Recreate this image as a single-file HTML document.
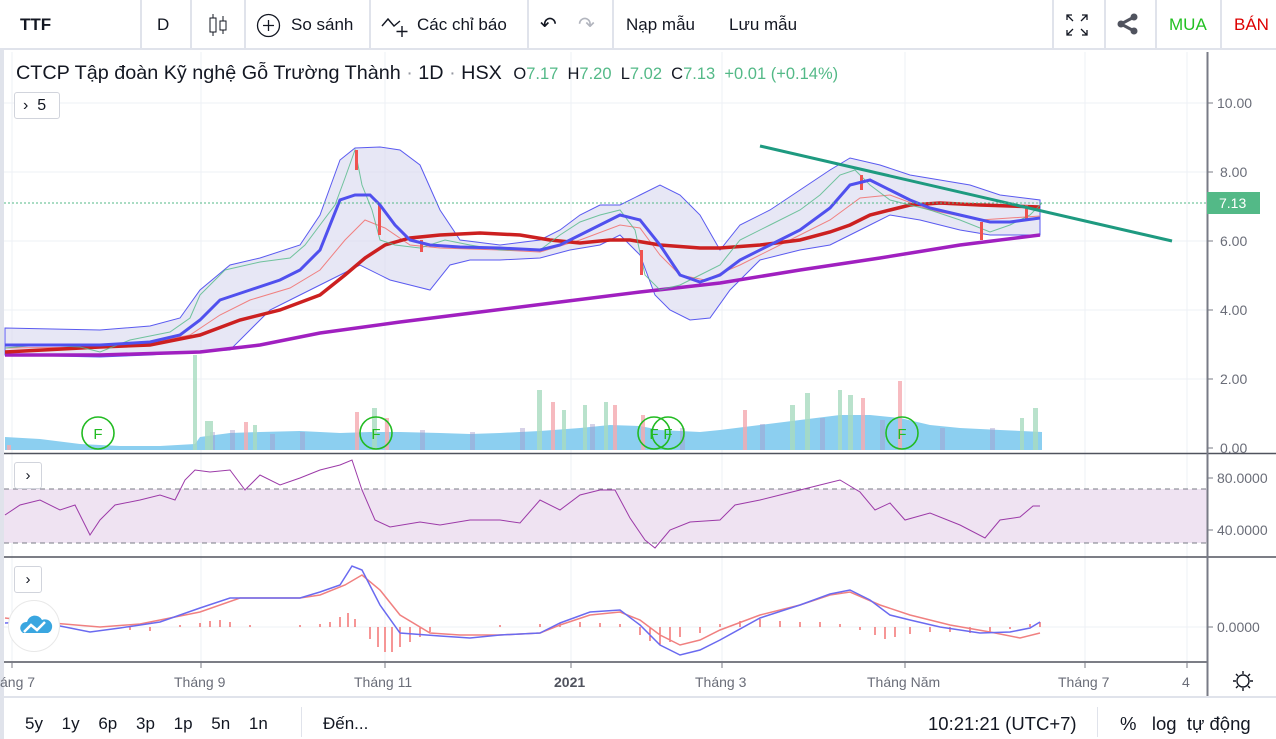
<!DOCTYPE html>
<html><head><meta charset="utf-8"><style>
*{margin:0;padding:0;box-sizing:border-box}
body{width:1276px;height:739px;overflow:hidden;background:#fff;font-family:"Liberation Sans","Noto Sans CJK SC",sans-serif;color:#131722;position:relative}
.tb{position:absolute;top:0;left:0;width:1276px;height:50px;border-bottom:2px solid #e0e3eb;background:#fff}
.tb div{position:absolute;top:0;height:50px;line-height:50px;font-size:17px}
.sep{position:absolute;top:0;width:2px;height:50px;background:#e0e3eb}
.t{position:absolute;white-space:nowrap}
.ax{font-size:14px;color:#6a6d78}
</style></head><body>
<div style="position:absolute;left:0;top:50px;width:4px;height:689px;background:#e0e3eb"></div>
<div class="tb">
<div style="left:20px;font-weight:bold">TTF</div>
<div class="sep" style="left:140px"></div>
<div style="left:157px">D</div>
<div class="sep" style="left:190px"></div>
<svg style="position:absolute;left:207px;top:13px" width="22" height="24"><line x1="6" y1="1" x2="6" y2="23" stroke="#131722"/><rect x="3" y="5" width="6" height="14" fill="#fff" stroke="#131722"/><line x1="16" y1="3" x2="16" y2="21" stroke="#131722"/><rect x="13" y="8" width="6" height="9" fill="#fff" stroke="#131722"/></svg>
<div class="sep" style="left:244px"></div>
<svg style="position:absolute;left:256px;top:13px" width="25" height="25"><circle cx="12.5" cy="12.5" r="11" fill="none" stroke="#131722" stroke-width="1.3"/><path d="M12.5 7v11M7 12.5h11" stroke="#131722" stroke-width="1.3"/></svg>
<div style="left:291px">So sánh</div>
<div class="sep" style="left:369px"></div>
<svg style="position:absolute;left:380px;top:12px" width="32" height="28"><path d="M2 14l6-7 6 7 6-5" fill="none" stroke="#131722" stroke-width="1.4"/><path d="M22 14v11M16.5 19.5h11" stroke="#131722" stroke-width="1.4"/></svg>
<div style="left:417px">Các chỉ báo</div>
<div class="sep" style="left:527px"></div>
<div style="left:540px;font-size:20px">↶</div>
<div style="left:578px;font-size:20px;color:#b2b5be">↷</div>
<div class="sep" style="left:612px"></div>
<div style="left:626px">Nạp mẫu</div>
<div style="left:729px">Lưu mẫu</div>
<div class="sep" style="left:1052px"></div>
<svg style="position:absolute;left:1065px;top:13px" width="24" height="24" fill="none" stroke="#131722" stroke-width="1.3"><path d="M2 7V2h5M2 2l6 6M17 2h5v5M22 2l-6 6M2 17v5h5M2 22l6-6M22 17v5h-5M22 22l-6-6"/></svg>
<div class="sep" style="left:1104px"></div>
<svg style="position:absolute;left:1116px;top:13px" width="24" height="22"><circle cx="18" cy="4" r="3.5" fill="#50535e"/><circle cx="5" cy="11" r="3.5" fill="#50535e"/><circle cx="18" cy="18" r="3.5" fill="#50535e"/><path d="M18 4L5 11l13 7" fill="none" stroke="#50535e" stroke-width="3"/></svg>
<div class="sep" style="left:1155px"></div>
<div style="left:1169px;color:#22c022">MUA</div>
<div class="sep" style="left:1220px"></div>
<div style="left:1234px;color:#d00">BÁN</div>
</div>

<svg style="position:absolute;left:0;top:52px" width="1276" height="687">
<g transform="translate(0,-52)">
<g stroke="#eef1f6" stroke-width="1">
<line x1="12" y1="52" x2="12" y2="662"/><line x1="201" y1="52" x2="201" y2="662"/><line x1="385" y1="52" x2="385" y2="662"/><line x1="571" y1="52" x2="571" y2="662"/><line x1="722" y1="52" x2="722" y2="662"/><line x1="905" y1="52" x2="905" y2="662"/><line x1="1085" y1="52" x2="1085" y2="662"/><line x1="1187" y1="52" x2="1187" y2="662"/>
<line x1="4" y1="103" x2="1207" y2="103"/><line x1="4" y1="172" x2="1207" y2="172"/><line x1="4" y1="241" x2="1207" y2="241"/><line x1="4" y1="310" x2="1207" y2="310"/><line x1="4" y1="379" x2="1207" y2="379"/>
<line x1="4" y1="530" x2="1207" y2="530"/><line x1="4" y1="627" x2="1207" y2="627"/>
</g>
<path d="M5 450 L5 437 L40 439 L80 444 L120 446 L160 446 L195 444 L200 437 L230 433 L260 432 L300 431 L340 433 L370 432 L400 432 L440 433 L470 434 L500 433 L540 431 L580 428 L610 425 L640 426 L660 430 L700 432 L720 430 L760 425 L800 420 L840 415 L870 415 L900 418 L930 425 L960 428 L1000 430 L1042 432 L1042 450Z" fill="#8ccff0"/>
<g fill="#a89ccc" opacity=".45"><rect x="210" y="432" width="5" height="18"/><rect x="230" y="430" width="5" height="20"/><rect x="270" y="434" width="5" height="16"/><rect x="300" y="432" width="5" height="18"/><rect x="420" y="430" width="5" height="20"/><rect x="470" y="432" width="5" height="18"/><rect x="520" y="428" width="5" height="22"/><rect x="590" y="424" width="5" height="26"/><rect x="680" y="428" width="5" height="22"/><rect x="760" y="424" width="5" height="26"/><rect x="820" y="418" width="5" height="32"/><rect x="880" y="420" width="5" height="30"/><rect x="940" y="428" width="5" height="22"/><rect x="990" y="428" width="5" height="22"/></g>
<g fill="#a8dcc0" opacity=".8"><rect x="193" y="355" width="4" height="95"/><rect x="205" y="421" width="8" height="29"/><rect x="253" y="425" width="4" height="25"/><rect x="372" y="408" width="5" height="42"/><rect x="537" y="390" width="5" height="60"/><rect x="562" y="410" width="4" height="40"/><rect x="790" y="405" width="5" height="45"/><rect x="805" y="393" width="5" height="57"/><rect x="838" y="390" width="4" height="60"/><rect x="848" y="395" width="5" height="55"/><rect x="1033" y="408" width="5" height="42"/><rect x="1020" y="418" width="4" height="32"/><rect x="604" y="402" width="4" height="48"/><rect x="583" y="405" width="4" height="45"/></g>
<g fill="#f5aab0" opacity=".8"><rect x="244" y="422" width="4" height="28"/><rect x="355" y="412" width="4" height="38"/><rect x="385" y="418" width="4" height="32"/><rect x="551" y="402" width="4" height="48"/><rect x="613" y="405" width="4" height="45"/><rect x="641" y="415" width="4" height="35"/><rect x="743" y="410" width="4" height="40"/><rect x="861" y="398" width="4" height="52"/><rect x="898" y="381" width="4" height="69"/><rect x="7" y="445" width="4" height="5"/></g>
<g fill="none" stroke="#22bb22" stroke-width="1.6"><circle cx="98" cy="433" r="16"/><circle cx="376" cy="433" r="16"/><circle cx="654" cy="433" r="16"/><circle cx="668" cy="433" r="16"/><circle cx="902" cy="433" r="16"/></g>
<g font-size="15" fill="#22bb22" text-anchor="middle"><text x="98" y="439">F</text><text x="376" y="439">F</text><text x="654" y="439">F</text><text x="668" y="439">F</text><text x="902" y="439">F</text></g>
<path d="M5 328 L100 330 L150 326 L180 318 L200 290 L230 265 L260 258 L300 245 L320 215 L340 160 L355 148 L380 147 L400 150 L420 165 L440 210 L460 240 L500 245 L540 240 L560 230 L580 215 L600 205 L620 205 L640 195 L660 185 L680 195 L700 215 L720 250 L740 225 L770 210 L800 190 L830 170 L850 158 L880 165 L910 175 L940 180 L970 185 L1000 195 L1040 200 L1040 235 L990 235 L960 230 L920 220 L890 215 L870 225 L850 235 L830 245 L800 250 L760 260 L730 290 L710 318 L690 320 L670 310 L655 295 L640 255 L620 235 L600 245 L570 250 L540 258 L500 260 L470 260 L450 265 L430 290 L410 285 L390 280 L360 265 L330 280 L300 295 L270 310 L250 330 L230 350 L190 352 L150 355 L100 357 L5 355Z" fill="#d7d7ee" fill-opacity=".6" stroke="#5a5af0" stroke-width="1"/>
<polyline fill="none" stroke="#f08080" stroke-width="1" points="5,348 100,347 150,343 190,335 220,315 250,300 290,288 320,270 345,240 365,220 385,228 410,245 440,248 500,250 540,252 580,240 620,225 640,228 660,255 680,275 705,280 740,265 790,240 830,220 860,198 890,195 930,210 980,220 1040,216"/>
<polyline fill="none" stroke="#a020c0" stroke-width="3.5" points="5,355 100,355 200,352 260,345 320,333 400,322 480,312 560,302 640,292 720,283 800,270 880,258 960,245 1040,235"/>
<polyline fill="none" stroke="#cc2020" stroke-width="3.5" points="5,352 100,347 150,345 200,335 240,320 280,310 320,295 345,275 365,258 385,245 410,238 440,235 480,233 520,235 550,240 580,243 610,240 630,240 660,245 700,248 720,248 760,245 800,240 830,232 850,225 870,215 890,210 910,205 940,203 980,205 1040,207"/>
<polyline fill="none" stroke="#53b987" stroke-width="1" stroke-opacity=".8" points="5,348 40,345 80,347 100,352 130,340 170,332 190,318 200,295 225,270 260,262 290,258 305,245 320,225 335,205 345,178 355,150 362,185 372,210 380,240 395,245 420,248 445,240 470,245 500,250 540,250 560,235 580,222 600,215 620,210 635,230 645,275 660,290 680,285 700,275 720,265 740,240 770,225 800,210 820,195 840,175 855,170 870,185 890,200 910,205 930,210 960,220 990,232 1010,225 1030,215 1042,203"/>
<g fill="#ef5350"><rect x="355" y="150" width="3" height="20"/><rect x="378" y="205" width="3" height="30"/><rect x="640" y="250" width="3" height="25"/><rect x="860" y="175" width="3" height="15"/><rect x="980" y="222" width="3" height="18"/><rect x="1025" y="205" width="3" height="14"/><rect x="420" y="240" width="3" height="12"/></g>
<polyline fill="none" stroke="#5050ee" stroke-width="3" points="5,345 100,345 150,342 180,335 200,320 220,300 250,290 280,280 300,270 320,250 340,200 355,195 370,195 380,205 395,225 410,240 430,245 460,247 500,248 540,250 560,245 580,235 600,225 620,215 640,220 660,245 680,275 700,282 720,275 740,260 770,245 800,230 830,208 850,185 870,180 890,190 910,200 930,208 960,215 990,222 1010,222 1040,218"/>
<line x1="760" y1="146" x2="1172" y2="241" stroke="#1e9a80" stroke-width="3"/>
<line x1="4" y1="203" x2="1207" y2="203" stroke="#53b987" stroke-width="1" stroke-dasharray="2,2"/>
<line x1="4" y1="453.5" x2="1276" y2="453.5" stroke="#50535e" stroke-width="1.5"/>
<line x1="4" y1="557" x2="1276" y2="557" stroke="#50535e" stroke-width="1.5"/>
<line x1="4" y1="662" x2="1207" y2="662" stroke="#50535e" stroke-width="1.5"/>
<rect x="4" y="489" width="1203" height="54" fill="#efe3f2"/>
<line x1="4" y1="489" x2="1207" y2="489" stroke="#787b86" stroke-dasharray="5,4"/>
<line x1="4" y1="543" x2="1207" y2="543" stroke="#787b86" stroke-dasharray="5,4"/>
<polyline fill="none" stroke="#9c3aa8" stroke-width="1" points="5,515 20,505 40,500 60,510 75,505 90,535 100,520 115,505 140,500 160,495 175,500 185,480 195,470 210,472 230,470 245,490 260,475 280,485 300,478 320,470 340,465 352,460 362,490 375,520 390,527 420,522 440,525 470,520 500,520 520,523 540,500 560,510 580,495 600,490 615,490 630,518 645,540 655,548 670,530 690,522 720,520 735,505 760,500 780,495 800,490 820,485 840,480 860,492 875,510 890,503 905,520 930,513 960,525 985,538 1000,520 1020,517 1033,506 1040,506"/>
<g stroke="#f05050" stroke-width="1.2">
<path d="M130 627v3M150 627v4M180 627v-2M200 627v-4M210 627v-6M220 627v-7M230 627v-5M250 627v-2M300 627v-2M320 627v-3M330 627v-5M340 627v-10M348 627v-14M355 627v-8M370 627v12M378 627v20M385 627v25M392 627v25M400 627v20M410 627v15M420 627v10M430 627v5M500 627v-2M540 627v-3M560 627v-4M580 627v-5M600 627v-4M620 627v-3M640 627v8M650 627v14M660 627v18M670 627v15M680 627v10M700 627v6M720 627v-3M740 627v-6M760 627v-8M780 627v-6M800 627v-5M820 627v-5M840 627v-3M860 627v3M875 627v8M885 627v12M895 627v10M910 627v7M930 627v5M950 627v5M970 627v6M990 627v5M1010 627v2M1030 627v-3M1040 627v-5"/>
</g>
<polyline fill="none" stroke="#f08080" stroke-width="1.5" points="5,618 40,622 100,627 140,624 200,612 240,598 300,598 320,595 345,585 362,575 380,590 400,615 430,633 460,635 500,635 540,633 560,625 590,615 620,612 640,620 660,635 680,645 700,640 720,630 760,615 800,605 830,595 850,592 880,605 910,615 950,625 990,632 1020,638 1040,633"/>
<polyline fill="none" stroke="#6a6af0" stroke-width="1.5" points="5,623 40,622 90,632 120,628 160,622 200,608 230,598 300,598 320,592 340,585 352,566 362,570 380,605 400,633 440,636 470,638 500,635 540,633 560,623 590,612 620,610 640,625 660,645 680,655 700,650 720,640 760,618 800,605 830,594 850,590 870,600 890,615 910,620 940,627 980,633 1010,632 1030,628 1040,622"/>
<line x1="1207.5" y1="52" x2="1207.5" y2="696" stroke="#787b86" stroke-width="2"/>
<g stroke="#787b86"><path d="M1207 103h6M1207 172h6M1207 241h6M1207 310h6M1207 379h6M1207 448h6M1207 478h6M1207 530h6M1207 627h6M12 662v6M201 662v6M385 662v6M571 662v6M722 662v6M905 662v6M1085 662v6M1187 662v6"/></g>
<rect x="1207" y="192" width="53" height="22" fill="#53b987"/>
<text x="1219" y="208" font-size="14" fill="#fff">7.13</text>
<g font-size="14" fill="#6a6d78"><text x="1217" y="108">10.00</text><text x="1220" y="177">8.00</text><text x="1220" y="246">6.00</text><text x="1220" y="315">4.00</text><text x="1220" y="384">2.00</text><text x="1220" y="453">0.00</text><text x="1217" y="483">80.0000</text><text x="1217" y="535">40.0000</text><text x="1217" y="632">0.0000</text></g>
<g fill="none" stroke="#131722" stroke-width="1.4"><circle cx="1243" cy="681" r="6"/><path d="M1243 671v3M1243 688v3M1233 681h3M1250 681h3M1236 674l2 2M1248 686l2 2M1236 688l2-2M1248 676l2-2"/></g>
<line x1="4" y1="697" x2="1276" y2="697" stroke="#e0e3eb" stroke-width="2"/>
</g></svg>

<div class="t" style="left:16px;top:62px;font-size:19.8px">CTCP Tập đoàn Kỹ nghệ Gỗ Trường Thành <span style="color:#9598a1">·</span> 1D <span style="color:#9598a1">·</span> HSX <span style="font-size:16.5px;margin-left:6px;color:#131722">O<span style="color:#53b987">7.17</span>&nbsp; H<span style="color:#53b987">7.20</span>&nbsp; L<span style="color:#53b987">7.02</span>&nbsp; C<span style="color:#53b987">7.13</span>&nbsp; <span style="color:#53b987">+0.01 (+0.14%)</span></span></div>
<div class="t" style="left:14px;top:92px;width:46px;height:27px;border:1px solid #d1d4dc;border-radius:3px;font-size:16px;line-height:25px;padding-left:8px;background:#fff">›&nbsp; 5</div>
<div class="t" style="left:14px;top:462px;width:28px;height:27px;border:1px solid #d1d4dc;border-radius:3px;font-size:15px;line-height:25px;text-align:center;background:#fff">›</div>
<div class="t" style="left:14px;top:566px;width:28px;height:27px;border:1px solid #d1d4dc;border-radius:3px;font-size:15px;line-height:25px;text-align:center;background:#fff">›</div>
<div class="t" style="left:8px;top:600px;width:52px;height:52px;border-radius:50%;background:#fff;border:1px solid #e8e8e8"><svg width="52" height="52"><path d="M14 32 a6 6 0 0 1 4-11 a8 8 0 0 1 15-2 a7 7 0 0 1 6 13z" fill="#3aa6e0"/><path d="M15 31l7-7 6 5 8-8" fill="none" stroke="#fff" stroke-width="2.5"/></svg></div>
<div class="ax t" style="left:0;top:674px">áng 7</div>
<div class="ax t" style="left:174px;top:674px">Tháng 9</div>
<div class="ax t" style="left:354px;top:674px">Tháng 11</div>
<div class="t" style="left:554px;top:674px;font-size:14px;font-weight:bold;color:#50535e">2021</div>
<div class="ax t" style="left:695px;top:674px">Tháng 3</div>
<div class="ax t" style="left:867px;top:674px">Tháng Năm</div>
<div class="ax t" style="left:1058px;top:674px">Tháng 7</div>
<div class="ax t" style="left:1182px;top:674px">4</div>
<div class="t" style="left:25px;top:714px;font-size:17px;word-spacing:14px">5y 1y 6p 3p 1p 5n 1n</div>
<div class="t" style="left:301px;top:707px;width:1px;height:30px;background:#e0e3eb"></div>
<div class="t" style="left:323px;top:714px;font-size:17px">Đến...</div>
<div class="t" style="left:928px;top:713px;font-size:18.5px">10:21:21 (UTC+7)</div>
<div class="t" style="left:1097px;top:707px;width:1px;height:30px;background:#e0e3eb"></div>
<div class="t" style="left:1120px;top:713px;font-size:18.5px">%&nbsp;&nbsp;&nbsp;log&nbsp;&nbsp;tự động</div>
</body></html>
